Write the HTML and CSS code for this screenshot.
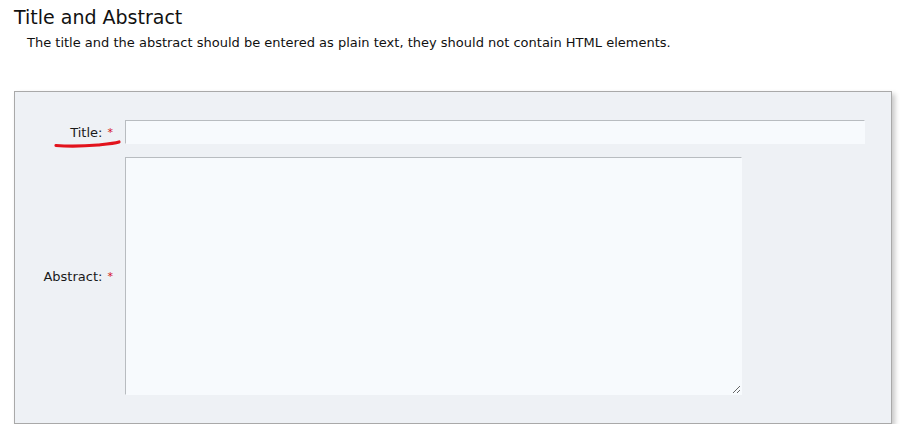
FILE: index.html
```html
<!DOCTYPE html>
<html>
<head>
<meta charset="utf-8">
<link rel="stylesheet" href="styles.css">
</head>
<body>
<div class="page">
  <h2 class="heading">Title and Abstract</h2>
  <p class="desc">The title and the abstract should be entered as plain text, they should not contain HTML elements.</p>
  <div class="panel">
    <div class="form">
      <label class="label" for="title">Title: <span class="req">*</span></label>
      <div class="field"><input id="title" class="text-input" type="text"></div>
      <label class="label" for="abstract">Abstract: <span class="req">*</span></label>
      <div class="field"><textarea id="abstract" class="textarea"></textarea></div>
    </div>
    <svg class="scribble" width="70" height="12" viewBox="0 0 70 12">
      <path d="M2 8.5 C 14 9.5, 30 9.2, 44 8 C 54 7, 60 6.5, 65 5" fill="none" stroke="#e2131c" stroke-width="3.2" stroke-linecap="round"/>
    </svg>
  </div>
</div>
</body>
</html>
```
FILE: styles.css
```css
html, body {
  margin: 0;
  padding: 0;
  background: #ffffff;
}
body {
  font-family: "DejaVu Sans", Verdana, sans-serif;
  color: #1a1a1a;
}
.page {
  padding: 6px 0 0 14px;
}
.heading {
  margin: 0;
  font-size: 19px;
  font-weight: normal;
  line-height: 22px;
  color: #111;
}
.desc {
  margin: 7px 0 0 13px;
  font-size: 13px;
  line-height: 16px;
  color: #111;
}
.panel {
  position: relative;
  width: 876px;
  margin-top: 40px;
  background: #eef1f5;
  border: 1px solid #a9a9a9;
  box-shadow: 3px 3px 5px rgba(0,0,0,0.22);
  padding: 28px 0 28px 0;
}
.form {
  display: grid;
  grid-template-columns: 98px 1fr;
  column-gap: 12px;
  row-gap: 13px;
  align-items: center;
}
.label {
  text-align: right;
  font-size: 13px;
  color: #1a1a1a;
  white-space: nowrap;
}
.req {
  color: #d4101a;
  font-size: 11px;
  margin-left: 1px;
  vertical-align: 1px;
}
.field {
  display: flex;
}
.text-input {
  width: 740px;
  height: 24px;
  box-sizing: border-box;
  border: 1px solid #f7fafd;
  border-top-color: #b8bcc0;
  border-left-color: #b8bcc0;
  background: #f7fafd;
  margin: 0;
  padding: 0 4px;
  outline: none;
  font-family: inherit;
}
.textarea {
  width: 617px;
  height: 238px;
  box-sizing: border-box;
  border: 1px solid #f7fafd;
  border-top-color: #b8bcc0;
  border-left-color: #b8bcc0;
  background: #f7fafd;
  margin: 0;
  padding: 2px;
  outline: none;
  font-family: inherit;
}
.scribble {
  position: absolute;
  left: 39px;
  top: 45px;
}
```
